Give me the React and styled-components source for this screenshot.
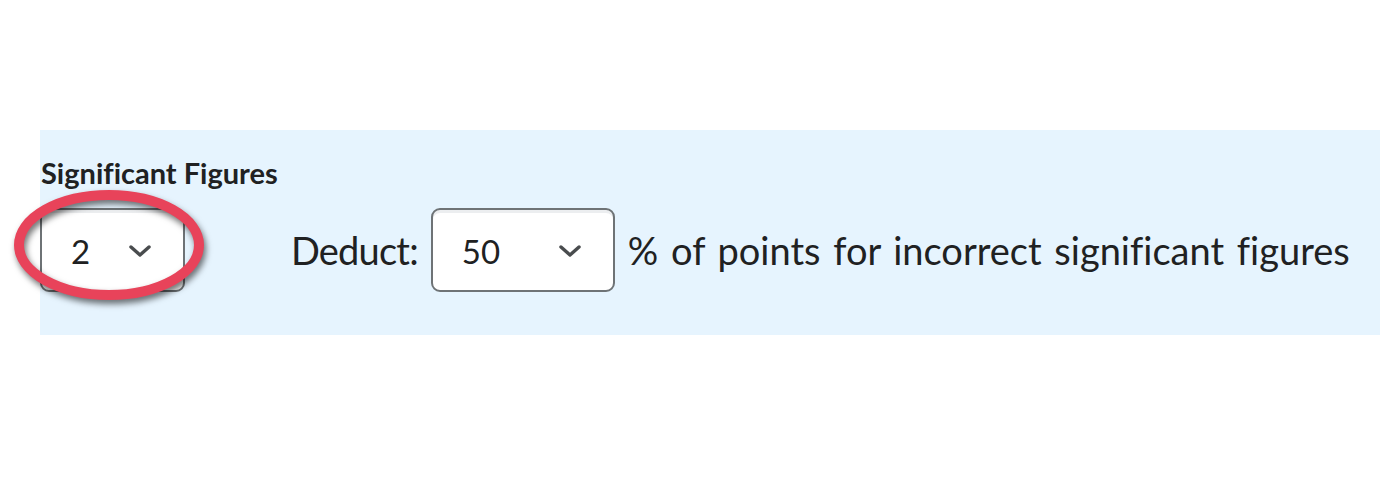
import React from 'react';
import styled, { createGlobalStyle } from 'styled-components';

const GlobalStyle = createGlobalStyle`
    html, body {
        margin: 0;
        padding: 0;
        background: #fff;
    }
    body {
        font-family: Lato, "Open Sans", sans-serif;
        font-variant-ligatures: none;
        color: #202122;
    }
`;

const Page = styled.div`
    padding-top: 130px;
    padding-left: 40px;
    height: 478px;
    box-sizing: border-box;
`;

const Panel = styled.section`
    background: #e6f4fe;
    height: 205px;
    box-sizing: border-box;
    padding-top: 26px;
`;

const Title = styled.h4`
    margin: 0 0 0 1px;
    font-size: 29px;
    line-height: 34px;
    font-weight: 700;
    color: #202122;
`;

const Row = styled.div`
    display: flex;
    align-items: center;
    margin-top: 18px;
`;

const Label = styled.span`
    font-size: 38px;
    line-height: 44px;
    color: #202122;
    margin: ${p => p.$margin || '0'};
    letter-spacing: ${p => p.$tight ? '-0.8px' : '0'};
    word-spacing: ${p => p.$tight ? '0' : '3px'};
`;

const SelectBox = styled.div`
    position: relative;
    display: flex;
    align-items: center;
    justify-content: space-between;
    box-sizing: border-box;
    width: ${p => p.$width}px;
    height: 84px;
    padding: 2px 31px 0 29px;
    background: #fff;
    border: 2px solid #6e7376;
    border-radius: 9px;
    box-shadow: inset 0 3px 0 0 rgba(181, 189, 194, 0.25);
    font-size: 33px;
    color: #202122;
`;

const Marked = styled.div`
    position: relative;
`;

// red marker ring drawn over the first dropdown
const Ring = styled.svg`
    position: absolute;
    left: -30px;
    top: -20px;
    width: 200px;
    height: 122px;
    overflow: visible;
    pointer-events: none;
    filter: drop-shadow(2px 4px 3px rgba(0, 0, 0, 0.55));
`;

const Chevron = () => (
    <svg width="24" height="14" viewBox="0 0 24 14">
        <path d="M3 3 L12 11 L21 3" fill="none" stroke="#494c4e" strokeWidth="3.4" strokeLinecap="round" strokeLinejoin="round" />
    </svg>
);

const Select = ({ value, width }) => (
    <SelectBox $width={width}>
        <span>{value}</span>
        <Chevron />
    </SelectBox>
);

const App = () => {
    return (
        <>
            <GlobalStyle />
            <Page>
                <Panel>
                    <Title>Significant Figures</Title>
                    <Row>
                        <Marked>
                            <Select value="2" width={145} />
                            <Ring viewBox="0 0 200 122">
                                <ellipse cx="99" cy="57" rx="90" ry="50" fill="none" stroke="#e8435a" strokeWidth="10" />
                            </Ring>
                        </Marked>
                        <Label $tight $margin="0 13px 0 106px">Deduct:</Label>
                        <Select value="50" width={184} />
                        <Label $margin="0 0 0 13px">% of points for incorrect significant figures</Label>
                    </Row>
                </Panel>
            </Page>
        </>
    );
};

export default App;
